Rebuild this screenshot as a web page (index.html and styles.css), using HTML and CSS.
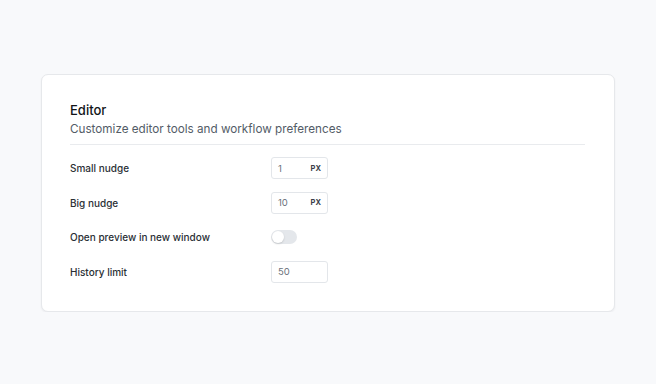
FILE: index.html
```html
<!DOCTYPE html>
<html lang="en">
<head>
    <meta charset="UTF-8">
    <title>Editor settings</title>
    <link rel="stylesheet" href="styles.css">
</head>
<body>
    <main class="page">
        <section class="card">
            <header class="card-head">
                <h2 class="card-title">Editor</h2>
                <p class="card-subtitle">Customize editor tools and workflow preferences</p>
            </header>

            <div class="settings">
                <div class="setting">
                    <span class="setting-label">Small nudge</span>
                    <div class="field">
                        <span class="field-value">1</span>
                        <span class="field-unit">PX</span>
                    </div>
                </div>
                <div class="setting">
                    <span class="setting-label">Big nudge</span>
                    <div class="field">
                        <span class="field-value">10</span>
                        <span class="field-unit">PX</span>
                    </div>
                </div>
                <div class="setting">
                    <span class="setting-label">Open preview in new window</span>
                    <div class="toggle"><span class="toggle-knob"></span></div>
                </div>
                <div class="setting">
                    <span class="setting-label">History limit</span>
                    <div class="field">
                        <span class="field-value">50</span>
                    </div>
                </div>
            </div>
        </section>
    </main>
</body>
</html>
```

FILE: styles.css
```css
* {
    margin: 0;
    padding: 0;
    box-sizing: border-box;
    font-family: Inter, "Noto Sans", sans-serif;
}

body {
    background: #f8f9fb;
    color: #1f2328;
}

.page {
    padding: 74px 41px 0;
}

/* Карточка */
.card {
    background: #fff;
    border: 1px solid #e6e8eb;
    border-radius: 7px;
    box-shadow: 0 1px 2px rgba(16, 24, 40, 0.06);
    padding: 27px 29px 28px 28px;
}

.card-head {
    border-bottom: 1px solid #e9ebee;
    padding-bottom: 7px;
    margin-bottom: 12px;
}

.card-title {
    font-size: 13px;
    line-height: 16px;
    font-weight: 500;
    color: #111418;
}

.card-subtitle {
    margin-top: 3px;
    font-size: 11.7px;
    line-height: 16px;
    color: #535c67;
}

.settings {
    display: flex;
    flex-direction: column;
    gap: 12.5px;
}

.setting {
    display: grid;
    grid-template-columns: 201px auto;
    align-items: center;
    height: 22px;
}

.setting-label {
    font-size: 10px;
    font-weight: 500;
    color: #2a2f35;
}

.field {
    width: 57px;
    height: 22px;
    border: 1px solid #e3e6ea;
    border-radius: 3px;
    display: flex;
    align-items: center;
    justify-content: space-between;
    padding: 0 6px 0 6px;
    background: #fff;
}

.field-value {
    font-size: 9.5px;
    color: #6b727b;
}

.field-unit {
    font-size: 7.5px;
    font-weight: 700;
    color: #3a4048;
}

/* Переключатель */
.toggle {
    width: 26px;
    height: 14px;
    border-radius: 7px;
    background: #e4e7eb;
    position: relative;
}

.toggle-knob {
    position: absolute;
    top: 1px;
    left: 1px;
    width: 12px;
    height: 12px;
    border-radius: 50%;
    background: #fff;
    box-shadow: 0 1px 2px rgba(0, 0, 0, 0.15);
}
```
